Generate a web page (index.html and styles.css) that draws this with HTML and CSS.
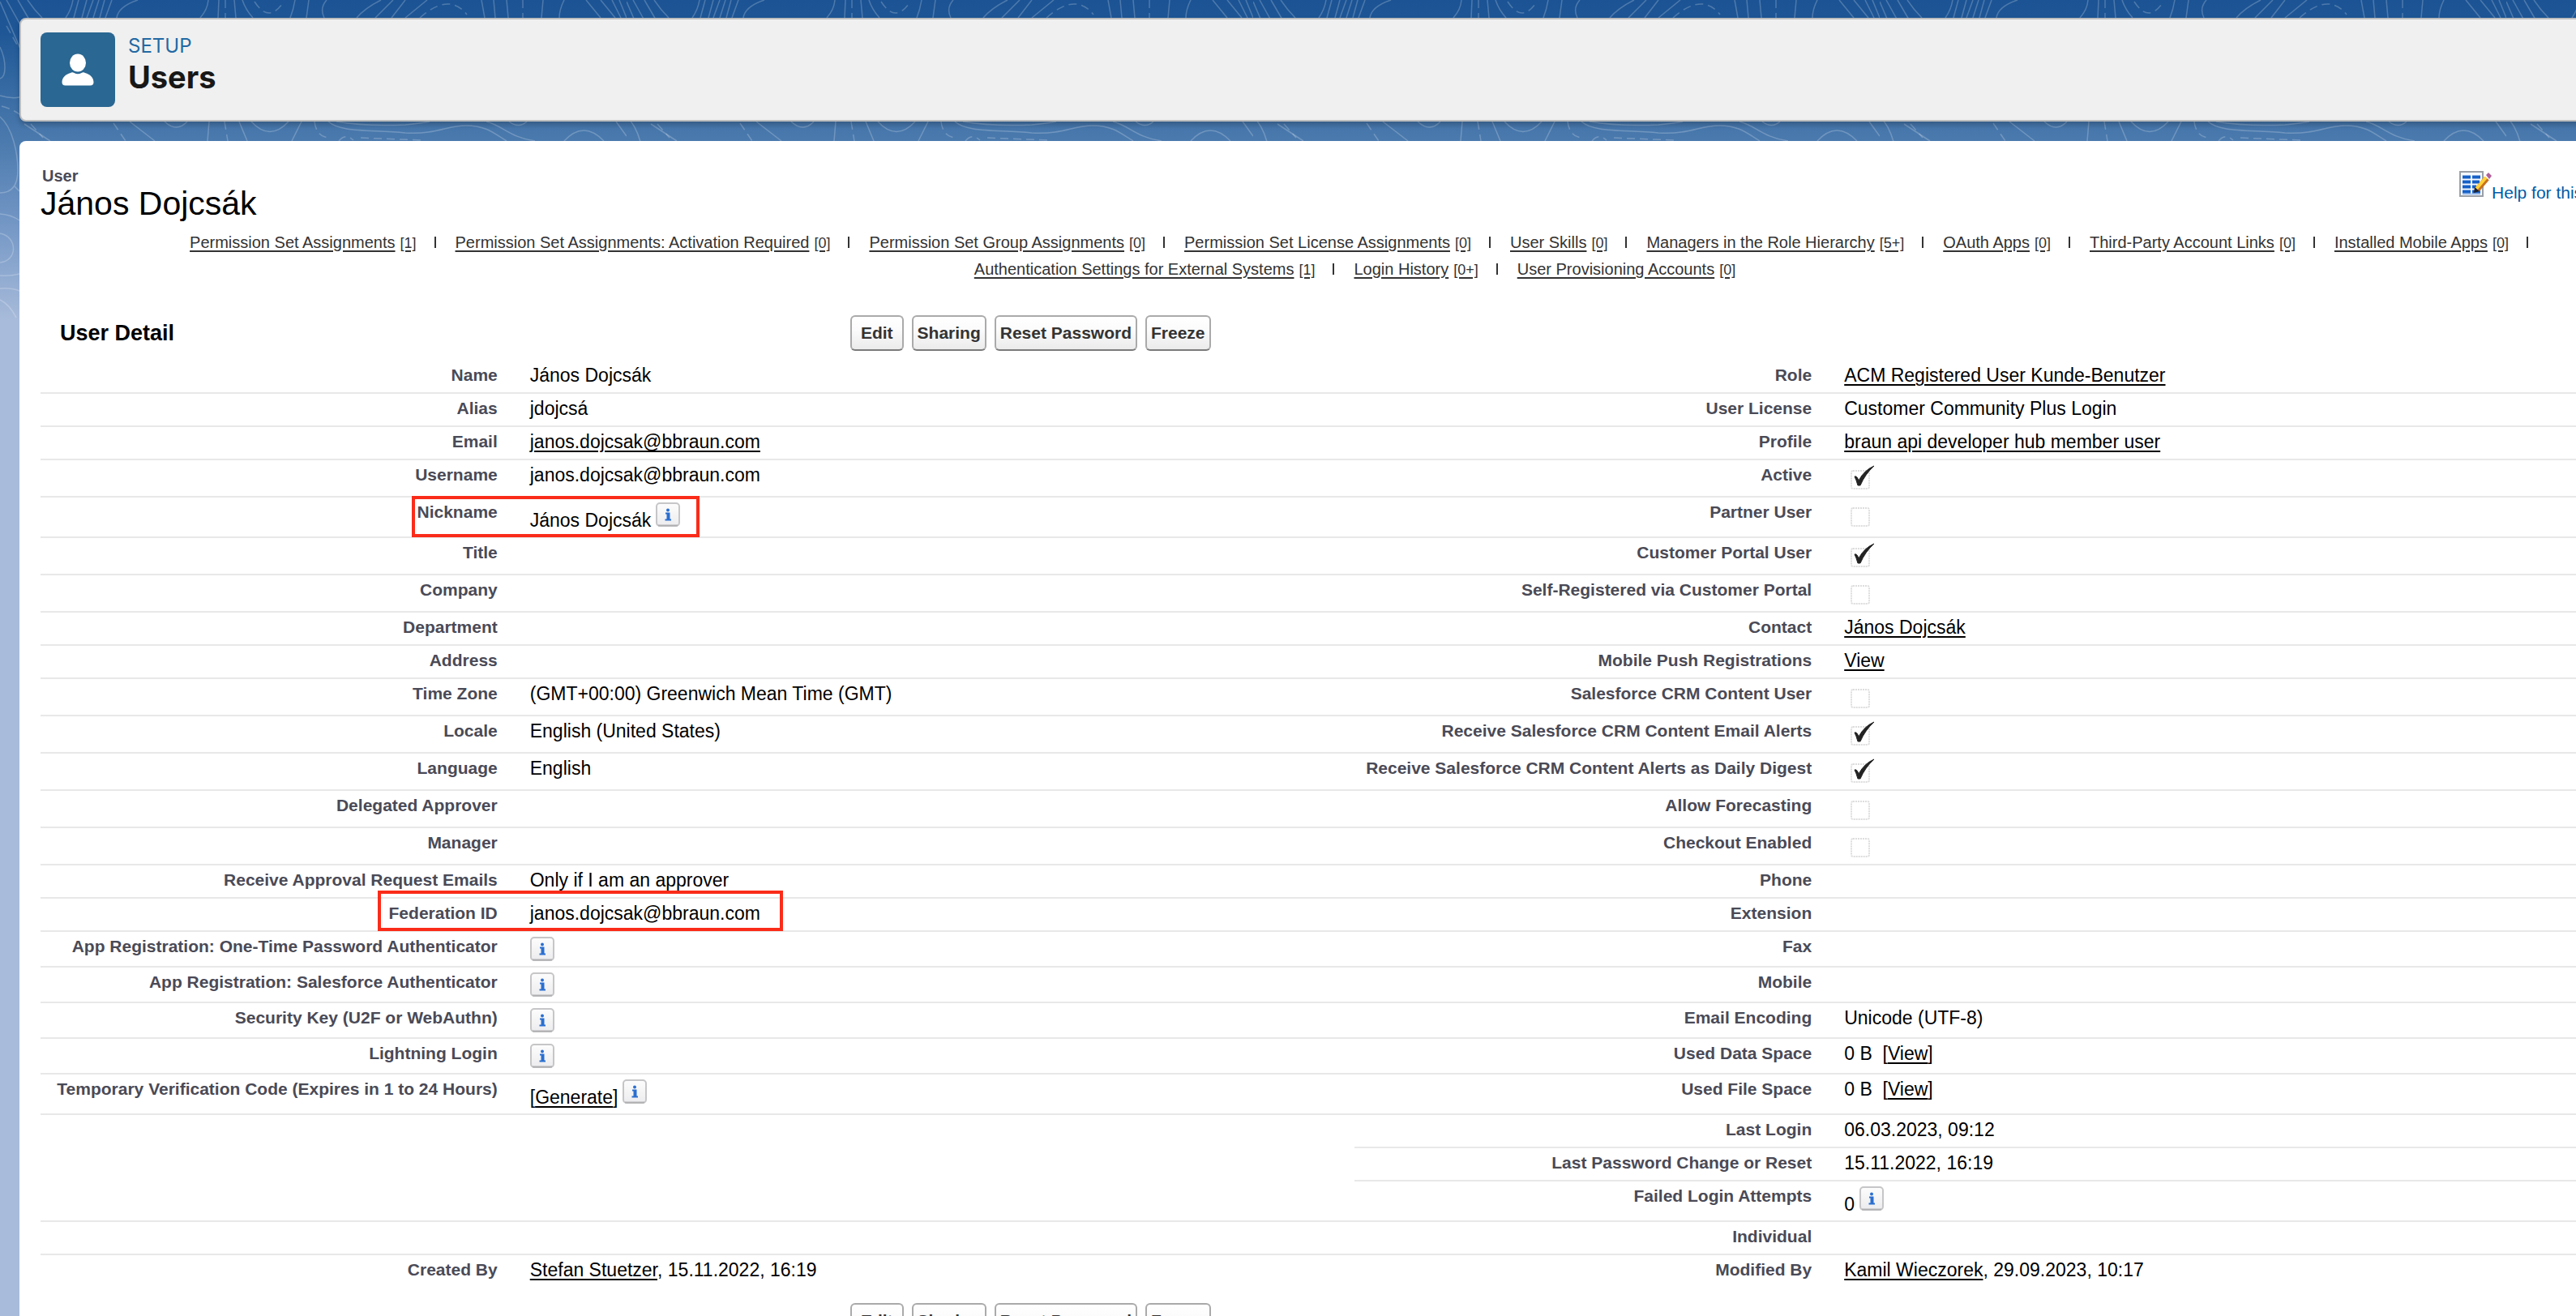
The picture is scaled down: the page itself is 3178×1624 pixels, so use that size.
FILE: index.html
```html
<!DOCTYPE html>
<html lang="en">
<head>
<meta charset="utf-8">
<title>Users | Setup</title>
<link rel="stylesheet" href="styles.css">
</head>
<body>
<svg class="defs" width="0" height="0" aria-hidden="true">
  <defs>
    <linearGradient id="info-fill" x1="0" y1="0" x2="0" y2="1">
      <stop offset="0" stop-color="#fdfdfd"/><stop offset="1" stop-color="#ececee"/>
    </linearGradient>
    <symbol id="info" viewBox="0 0 30 30">
      <rect x="1" y="1" width="28" height="28" rx="4" fill="url(#info-fill)" stroke="#c6c6c8" stroke-width="2"/>
      <path d="M3 28.500H27" stroke="#b0b0b2" stroke-width="2"/>
      <circle cx="15" cy="9.500" r="2" fill="#2a6fd0"/>
      <path d="M12 13.500h4.500v8M11.500 21.500h7.500" fill="none" stroke="#2a6fd0" stroke-width="2"/>
      <path d="M15 13v8" stroke="#2a6fd0" stroke-width="3"/>
    </symbol>
  </defs>
</svg>
<div class="page">
  <header class="page-header">
    <svg class="header-icon" viewBox="0 0 92 92" aria-hidden="true">
      <rect width="92" height="92" rx="8" fill="#2a6792"/>
      <ellipse cx="46" cy="37.500" rx="10" ry="11" fill="#fff"/>
      <path d="M37 50c1.500-1 3-.8 4.500 0 3 1.600 6 1.600 9 0 1.500-.8 3-1 4.500 0 6 1.500 10.500 6 10.500 11.500 0 2.500-1.500 4-4 4H30.500c-2.500 0-4-1.500-4-4C26.500 56 31 51.500 37 50z" fill="#fff"/>
    </svg>
    <div class="header-text">
      <p class="header-kicker">SETUP</p>
      <h1 class="header-title">Users</h1>
    </div>
  </header>

  <main class="content">
    <div class="title-row">
      <div>
        <p class="record-type">User</p>
        <h2 class="record-name">János Dojcsák</h2>
      </div>
      <a class="help" href="#">
        <svg width="40" height="32" viewBox="0 0 40 32" aria-hidden="true">
          <rect x="1" y="1" width="28" height="30" fill="#f4f8ff" stroke="#9a9fa6" stroke-width="2"/>
          <path d="M4 7.500h10M16 7.500h10M4 13.500h10M16 13.500h9M4 19.500h10M16 19.500h5M4 25.500h10M16 25.500h10" stroke="#1560c8" stroke-width="4"/>
          <path d="M4 28.500h22" stroke="#7fa9e0" stroke-width="1"/>
          <path d="M34 9L22 23" stroke="#c9701c" stroke-width="7"/>
          <path d="M33 8L21 22" stroke="#ffd23c" stroke-width="4"/>
          <path d="M18 27l1-7 6 5z" fill="#1c2230"/>
          <path d="M33 5l3-3 4 4-3 4z" fill="#b0609a"/>
        </svg><span>Help for this Page</span>
        <svg class="help-mark" width="32" height="32" viewBox="0 0 32 32" aria-hidden="true"><circle cx="16" cy="16" r="14" fill="#1560c8"/></svg>
      </a>
    </div>

    <nav class="related" aria-label="Related lists">
      <ul class="related-row related-first">
        <li><a href="#">Permission Set Assignments</a><a class="count" href="#">[1]</a></li>
        <li><a href="#">Permission Set Assignments: Activation Required</a><a class="count" href="#">[0]</a></li>
        <li><a href="#">Permission Set Group Assignments</a><a class="count" href="#">[0]</a></li>
        <li><a href="#">Permission Set License Assignments</a><a class="count" href="#">[0]</a></li>
        <li><a href="#">User Skills</a><a class="count" href="#">[0]</a></li>
        <li><a href="#">Managers in the Role Hierarchy</a><a class="count" href="#">[5+]</a></li>
        <li><a href="#">OAuth Apps</a><a class="count" href="#">[0]</a></li>
        <li><a href="#">Third-Party Account Links</a><a class="count" href="#">[0]</a></li>
        <li><a href="#">Installed Mobile Apps</a><a class="count" href="#">[0]</a></li>
      </ul>
      <ul class="related-row related-last">
        <li><a href="#">Authentication Settings for External Systems</a><a class="count" href="#">[1]</a></li>
        <li><a href="#">Login History</a><a class="count" href="#">[0+]</a></li>
        <li><a href="#">User Provisioning Accounts</a><a class="count" href="#">[0]</a></li>
      </ul>
    </nav>

    <div class="toolbar">
      <h3 class="section-title">User Detail</h3>
      <div class="buttons">
        <button class="btn btn-wide" type="button">Edit</button>
        <button class="btn" type="button">Sharing</button>
        <button class="btn" type="button">Reset Password</button>
        <button class="btn" type="button">Freeze</button>
      </div>
    </div>

    <table class="detail">
      <colgroup><col class="col-label"><col class="col-value"><col class="col-label"><col class="col-value"></colgroup>
      <tbody>
      <tr><th scope="row">Name</th><td>János Dojcsák</td><th scope="row">Role</th><td><a href="#">ACM Registered User Kunde-Benutzer</a></td></tr>
      <tr><th scope="row">Alias</th><td>jdojcsá</td><th scope="row">User License</th><td>Customer Community Plus Login</td></tr>
      <tr><th scope="row">Email</th><td><a href="#">janos.dojcsak@bbraun.com</a></td><th scope="row">Profile</th><td><a href="#">braun api developer hub member user</a></td></tr>
      <tr><th scope="row">Username</th><td>janos.dojcsak@bbraun.com</td><th scope="row"><label for="active">Active</label></th><td><input id="active" type="checkbox" checked disabled></td></tr>
      <tr><th scope="row">Nickname</th><td class="marked"><div class="with-info">János Dojcsák<svg class="info"><use href="#info"/></svg></div><span class="mark mark-nickname"></span></td><th scope="row"><label for="partner">Partner User</label></th><td><input id="partner" type="checkbox" disabled></td></tr>
      <tr><th scope="row">Title</th><td></td><th scope="row"><label for="portal">Customer Portal User</label></th><td><input id="portal" type="checkbox" checked disabled></td></tr>
      <tr><th scope="row">Company</th><td></td><th scope="row"><label for="selfreg">Self-Registered via Customer Portal</label></th><td><input id="selfreg" type="checkbox" disabled></td></tr>
      <tr><th scope="row">Department</th><td></td><th scope="row">Contact</th><td><a href="#">János Dojcsák</a></td></tr>
      <tr><th scope="row">Address</th><td></td><th scope="row">Mobile Push Registrations</th><td><a href="#">View</a></td></tr>
      <tr><th scope="row">Time Zone</th><td>(GMT+00:00) Greenwich Mean Time (GMT)</td><th scope="row"><label for="crm">Salesforce CRM Content User</label></th><td><input id="crm" type="checkbox" disabled></td></tr>
      <tr><th scope="row">Locale</th><td>English (United States)</td><th scope="row"><label for="alerts">Receive Salesforce CRM Content Email Alerts</label></th><td><input id="alerts" type="checkbox" checked disabled></td></tr>
      <tr><th scope="row">Language</th><td>English</td><th scope="row"><label for="digest">Receive Salesforce CRM Content Alerts as Daily Digest</label></th><td><input id="digest" type="checkbox" checked disabled></td></tr>
      <tr><th scope="row">Delegated Approver</th><td></td><th scope="row"><label for="forecast">Allow Forecasting</label></th><td><input id="forecast" type="checkbox" disabled></td></tr>
      <tr><th scope="row">Manager</th><td></td><th scope="row"><label for="checkout">Checkout Enabled</label></th><td><input id="checkout" type="checkbox" disabled></td></tr>
      <tr><th scope="row">Receive Approval Request Emails</th><td>Only if I am an approver</td><th scope="row">Phone</th><td></td></tr>
      <tr><th scope="row">Federation ID</th><td class="marked">janos.dojcsak@bbraun.com<span class="mark mark-federation"></span></td><th scope="row">Extension</th><td></td></tr>
      <tr><th scope="row">App Registration: One-Time Password Authenticator</th><td><svg class="info info-only"><use href="#info"/></svg></td><th scope="row">Fax</th><td></td></tr>
      <tr><th scope="row">App Registration: Salesforce Authenticator</th><td><svg class="info info-only"><use href="#info"/></svg></td><th scope="row">Mobile</th><td></td></tr>
      <tr><th scope="row">Security Key (U2F or WebAuthn)</th><td><svg class="info info-only"><use href="#info"/></svg></td><th scope="row">Email Encoding</th><td>Unicode (UTF-8)</td></tr>
      <tr><th scope="row">Lightning Login</th><td><svg class="info info-only"><use href="#info"/></svg></td><th scope="row">Used Data Space</th><td>0 B&nbsp; [<a href="#">View</a>]</td></tr>
      <tr><th scope="row">Temporary Verification Code (Expires in 1 to 24 Hours)</th><td><div class="with-info">[<a href="#">Generate</a>]<svg class="info"><use href="#info"/></svg></div></td><th scope="row">Used File Space</th><td>0 B&nbsp; [<a href="#">View</a>]</td></tr>
      <tr><td colspan="2" rowspan="3"></td><th scope="row">Last Login</th><td>06.03.2023, 09:12</td></tr>
      <tr><th scope="row">Last Password Change or Reset</th><td>15.11.2022, 16:19</td></tr>
      <tr><th scope="row">Failed Login Attempts</th><td><div class="with-info">0<svg class="info"><use href="#info"/></svg></div></td></tr>
      <tr><td colspan="2"></td><th scope="row">Individual</th><td></td></tr>
      <tr class="last"><th scope="row">Created By</th><td><a href="#">Stefan Stuetzer</a>, 15.11.2022, 16:19</td><th scope="row">Modified By</th><td><a href="#">Kamil Wieczorek</a>, 29.09.2023, 10:17</td></tr>
      </tbody>
    </table>

    <div class="toolbar toolbar-bottom">
      <div class="section-title"></div>
      <div class="buttons">
        <button class="btn btn-wide" type="button">Edit</button>
        <button class="btn" type="button">Sharing</button>
        <button class="btn" type="button">Reset Password</button>
        <button class="btn" type="button">Freeze</button>
      </div>
    </div>
  </main>
</div>
</body>
</html>
```
FILE: styles.css
```css
* { box-sizing: border-box; }

html { height: 100%; overflow: hidden; }

body {
  margin: 0;
  height: 100%;
  overflow: hidden;
  font-family: "Liberation Sans", Arial, sans-serif;
  font-size: 23px;
  line-height: 30px;
  color: #000;
  background-color: #a8bbda;
  /* contour-line tile over the fading blue band */
  background-image:
    url("data:image/svg+xml,%3Csvg xmlns='http://www.w3.org/2000/svg' width='773' height='400'%3E%3Cg fill='none' stroke='%23fff' stroke-opacity='.22' stroke-width='1.5'%3E%3Cpath d='M0 2L25 60M8 0L27 34M22 0L36 24M34 0Q42 12 52 22M90 0Q88 12 81 22M97 0L91 22M107 0L101 22M115 0L107 22M122 0L115 22M129 0L123 22M138 0L130 22M170 0Q146 8 144 22M257 0Q256 12 247 22M270 0L269 22M289 0L291 22M299 0Q303 12 312 22M364 0Q362 12 358 22M381 0L378 22M403 0Q394 10 400 22M470 0Q450 10 440 22M485 0L463 22M500 0L483 22M527 0L500 22M594 0L598 22M609 0L611 22M625 0L627 22M670 0L668 22M696 0Q690 12 690 22M723 0L741 22M741 0L759 22M755 0L766 22M764 0L773 22'/%3E%3Cpath stroke-dasharray='10 6' d='M278 0V22M314 2Q332 30 350 2M518 22Q554 -10 576 18M645 0V22M8 32L22 57M2 131Q16 135 24 141M38 153L53 170M140 152L155 174M277 150L281 174M388 150Q390 168 405 170M418 174Q426 164 436 173M445 170L520 173'/%3E%3Cpath d='M0 58C8 75 8 95 0 97M0 118Q14 122 24 120M30 153L62 174M0 144C16 158 22 190 22 210C22 230 14 238 0 238M18 230L24 236M0 264Q14 265 24 272M0 288C22 292 22 322 0 324M0 340Q12 341 24 338M0 356Q14 355 24 359M0 370Q12 376 20 392M160 150L191 174M203 150Q218 164 231 150M258 150L256 174M295 150L305 174M310 150Q333 175 356 150M372 150L360 174M405 150C420 163 450 160 500 164C540 166 550 155 575 155S610 165 625 174M415 150Q450 156 500 154Q520 152 530 150M600 150C620 155 630 170 660 174M628 150Q640 159 650 150M696 174Q720 148 745 174M760 150L773 168'/%3E%3C/g%3E%3C/svg%3E"),
    linear-gradient(#1b5394 0, #1f5796 40px, #2f659f 90px, #4172a8 140px, #4b7aae 175px, #7598c6 280px, #a8bbda 395px);
  background-repeat: repeat-x;
  background-size: 773px 400px, 100% 400px;
}

.defs { position: absolute; }

p, h1, h2, h3, ul { margin: 0; padding: 0; }

a { color: inherit; text-underline-offset: 3px; text-decoration-thickness: 2px; }

/* the record is wider than the window and runs off its right edge */
.page {
  width: calc(100% + 141px);
  padding: 22px 0 0 24px;
}

.page-header {
  display: flex;
  gap: 16px;
  height: 128px;
  padding: 16px 24px;
  background: #f0f0f0;
  border: 2px solid #bebebe;
  border-radius: 8px;
  box-shadow: 0 4px 6px rgba(0, 0, 0, .22);
}

.header-icon { width: 92px; height: 92px; }
.header-text { padding-top: 2px; font-family: Inter, "Liberation Sans", sans-serif; }
.header-kicker { font-size: 24px; color: #2369a3; }
.header-title { font-size: 38px; line-height: 46px; font-weight: 700; color: #181818; }

.content {
  margin-top: 24px;
  padding: 32px 26px 40px;
  background: #fff;
  border-radius: 8px;
}

.title-row { display: flex; justify-content: space-between; }
.record-type { padding-left: 2px; font-size: 20px; line-height: 22px; font-weight: 700; color: #4a4a56; }
.record-name { font-size: 41px; line-height: 46px; font-weight: 400; }

.help { display: flex; padding-top: 5px; font-size: 21px; color: #015ba7; text-decoration: none; }
.help span { padding-top: 12px; }
.help-mark { margin-left: 20px; }

.related { margin-top: 9px; font-size: 20px; line-height: 32px; color: #333; }
.related-row { display: flex; justify-content: center; list-style: none; white-space: nowrap; }
.related-row li { display: flex; align-items: baseline; }
.related-row li + li { margin-left: 24px; }
.related-row li::after { content: ""; width: 2px; height: 14px; margin-left: 22px; background: #333; }
.related-first { padding-left: 10px; }
.related-last li:last-child::after { content: none; }
.count { margin-left: 6px; font-size: 18px; }

.toolbar { display: flex; align-items: center; margin: 40px 0 12px; }
.toolbar-bottom { margin-top: 18px; }
.section-title { width: calc(30% + 26px); padding-left: 24px; font-size: 27px; font-weight: 700; }
.buttons { display: flex; gap: 10px; }

.btn {
  height: 44px;
  padding: 0 5px;
  font: 700 21px "Liberation Sans", Arial, sans-serif;
  color: #333;
  background: linear-gradient(#fff, #fbfbfb 40%, #ebebeb);
  border: 2px solid #aaa;
  border-bottom-color: #7b7b7b;
  border-radius: 6px;
}
.btn-wide { padding: 0 11px; }

.detail { width: 100%; table-layout: fixed; border-collapse: separate; border-spacing: 0; }
.col-label { width: 18%; }
.col-value { width: 32%; }
.detail th, .detail td {
  height: 41px;
  padding: 3px 20px 6px;
  vertical-align: top;
  text-align: left;
  border-bottom: 2px solid #e8e8e8;
}
.detail th { font-size: 21px; font-weight: 700; text-align: right; color: #4a4a56; padding-left: 0; white-space: nowrap; }
.detail .last > * { border-bottom: 0; }

.detail input {
  appearance: none;
  display: block;
  width: 42px;
  height: 35px;
  margin: 0;
  background: url("data:image/svg+xml,%3Csvg xmlns='http://www.w3.org/2000/svg' width='42' height='35'%3E%3Crect x='9' y='10' width='22' height='22' rx='2' fill='none' stroke='%23ddd' stroke-width='2' stroke-dasharray='2 1'/%3E%3C/svg%3E") no-repeat;
}
.detail input:checked {
  background-image: url("data:image/svg+xml,%3Csvg xmlns='http://www.w3.org/2000/svg' width='42' height='35'%3E%3Crect x='9' y='10' width='22' height='22' rx='2' fill='none' stroke='%23ddd' stroke-width='2' stroke-dasharray='2 1'/%3E%3Cpath d='M13 17Q16 16 18 22Q25 9 37 4Q26 14 20 28H17Q15 21 13 17Z' fill='%23222' stroke='%23222'/%3E%3C/svg%3E");
}

.info { width: 30px; height: 30px; }
.info-only { display: block; margin-top: 3px; }
.with-info { display: flex; align-items: baseline; line-height: 28px; }
.with-info .info { margin: 3px 0 0 6px; }

.marked { position: relative; }
.mark { position: absolute; border: 4px solid #fa2c19; }
.mark-nickname { top: -2px; left: -126px; width: 355px; height: 51px; }
.mark-federation { top: -10px; left: -168px; width: 500px; height: 50px; }
```
